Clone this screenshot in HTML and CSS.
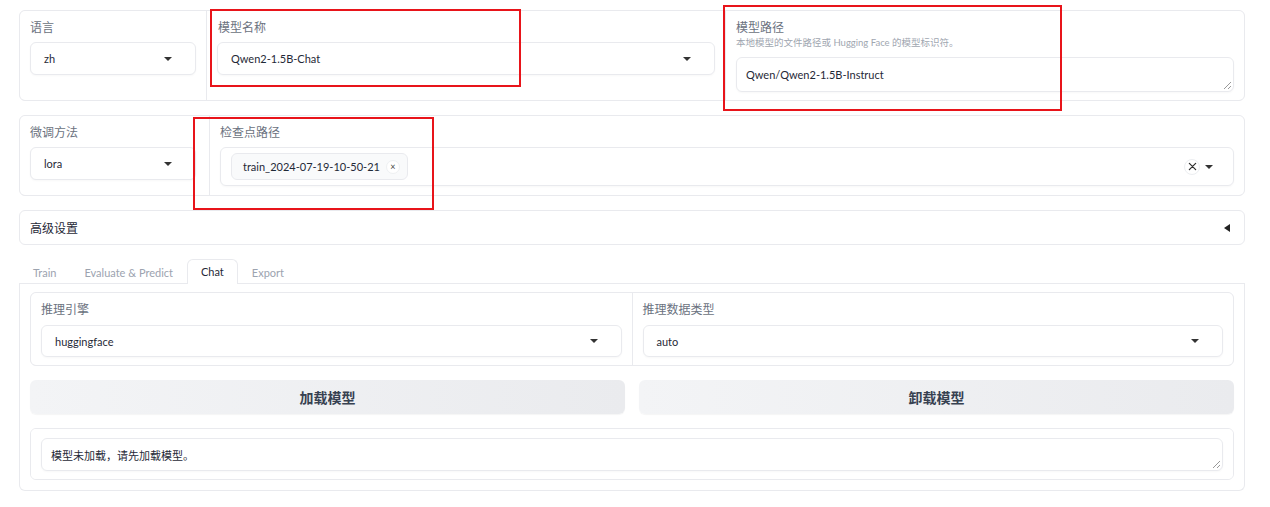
FILE: index.html
```html
<!DOCTYPE html>
<html lang="zh">
<head>
<meta charset="utf-8">
<title>LLaMA Board</title>
<link rel="stylesheet" href="styles.css">
</head>
<body>
<div class="page">
  <div class="form row1">
    <div class="block col-lang">
      <div class="label">语言</div>
      <div class="dropdown"><span class="val">zh</span><span class="caret"></span></div>
    </div>
    <div class="block col-wide">
      <div class="label">模型名称</div>
      <div class="dropdown"><span class="val">Qwen2-1.5B-Chat</span><span class="caret"></span></div>
    </div>
    <div class="block col-wide">
      <div class="label tight">模型路径</div>
      <div class="info">本地模型的文件路径或 Hugging Face 的模型标识符。</div>
      <div class="textarea"><span class="val">Qwen/Qwen2-1.5B-Instruct</span><span class="grip"></span></div>
    </div>
  </div>

  <div class="form row2">
    <div class="block col-method">
      <div class="label">微调方法</div>
      <div class="dropdown"><span class="val">lora</span><span class="caret"></span></div>
    </div>
    <div class="block col-fill">
      <div class="label">检查点路径</div>
      <div class="multi">
        <span class="chip">train_2024-07-19-10-50-21<span class="chip-x">×</span></span>
        <span class="multi-icons"><span class="clear">
          <svg width="9" height="9" viewBox="0 0 10 10"><path d="M1.5 1.5L8.5 8.5M8.5 1.5L1.5 8.5" stroke="#333" stroke-width="1.4" stroke-linecap="round"/></svg>
        </span><span class="caret"></span></span>
      </div>
    </div>
  </div>

  <div class="accordion">
    <span>高级设置</span>
    <span class="tri-left"></span>
  </div>

  <div class="tabs">
    <div class="tabbar">
      <span class="tab">Train</span>
      <span class="tab">Evaluate &amp; Predict</span>
      <span class="tab selected">Chat</span>
      <span class="tab">Export</span>
    </div>
    <div class="tabpanel">
      <div class="form inner">
        <div class="block col-half">
          <div class="label">推理引擎</div>
          <div class="dropdown short"><span class="val">huggingface</span><span class="caret"></span></div>
        </div>
        <div class="block col-half">
          <div class="label">推理数据类型</div>
          <div class="dropdown short"><span class="val">auto</span><span class="caret"></span></div>
        </div>
      </div>
      <div class="buttons">
        <button class="btn">加载模型</button>
        <button class="btn">卸载模型</button>
      </div>
      <div class="form outbox">
        <div class="block col-fill">
          <div class="textarea"><span class="val">模型未加载，请先加载模型。</span><span class="grip"></span></div>
        </div>
      </div>
    </div>
  </div>

  <div class="redbox rb1"></div>
  <div class="redbox rb2"></div>
  <div class="redbox rb3"></div>
</div>
</body>
</html>
```

FILE: styles.css
```css
* { box-sizing: border-box; }
html, body { margin: 0; padding: 0; background: #ffffff; }
body {
  font-family: "Lato", "Noto Sans CJK SC", sans-serif;
  font-size: 11px;
  color: #1f2937;
}
.page {
  position: relative;
  padding: 10px 25px 0 19px;
  width: 1270px;
  height: 507px;
}
.form {
  display: flex;
  gap: 1px;
  background: #e9eaee;
  border: 1px solid #e9eaee;
  border-radius: 6px;
  overflow: hidden;
}
.block {
  background: #fff;
  padding: 9px 10px 9px 10px;
}
.row1 { height: 91px; }
.row2 { height: 81px; margin-top: 14px; }
.col-lang { width: 186px; flex: none; }
.col-method { width: 189px; flex: none; padding-right: 13px; }
.col-wide { flex: 1; }
.col-fill { flex: 1; }
.col-half { flex: 1; }
.label {
  font-size: 12px;
  line-height: 16px;
  color: #6b7280;
  margin-bottom: 6px;
}
.label.tight { margin-bottom: 0; }
.row1 .col-wide:nth-child(2) .label { margin-left: 1px; }
.info {
  font-size: 9.5px;
  line-height: 14px;
  color: #a0a6b0;
  margin-bottom: 7px;
}
.dropdown, .textarea, .multi {
  position: relative;
  display: flex;
  align-items: center;
  border: 1px solid #e9eaee;
  border-radius: 6px;
  background: #fff;
  box-shadow: 0 1px 2px rgba(0,0,0,0.03);
  padding: 0 13px;
  font-size: 11px;
}
.dropdown { height: 33px; }
.dropdown.short { height: 32px; }
.textarea { height: 35px; padding: 0 9px; }
.val { flex: 1; white-space: nowrap; color: #1f2937; }
.caret {
  width: 0; height: 0;
  border-left: 4px solid transparent;
  border-right: 4px solid transparent;
  border-top: 4px solid #333;
  margin-right: 10px;
}
.grip {
  position: absolute;
  right: 2px; bottom: 2px;
  width: 7px; height: 7px;
  background:
    linear-gradient(135deg, transparent 45%, #999 45%, #999 55%, transparent 55%),
    linear-gradient(135deg, transparent 75%, #999 75%, #999 85%, transparent 85%);
}
.multi { height: 39px; padding: 0 10px; }
.chip {
  display: inline-flex;
  align-items: center;
  height: 27px;
  padding: 0 7px 0 11px;
  border: 1px solid #e9eaee;
  border-radius: 6px;
  background: #f9fafb;
  color: #1f2937;
  white-space: nowrap;
}
.chip-x {
  display: inline-flex;
  align-items: center;
  justify-content: center;
  width: 14px; height: 14px;
  margin-left: 6px;
  border-radius: 50%;
  border: 1px solid #eef0f2;
  background: #fff;
  font-size: 9px;
  color: #444;
}
.multi-icons { margin-left: auto; display: flex; align-items: center; }
.clear {
  display: inline-flex;
  align-items: center;
  justify-content: center;
  width: 16px; height: 16px;
  border-radius: 50%;
  border: 1px solid #eceef1;
  margin-right: 5px;
}
.multi .caret { margin-right: 10px; }

.accordion {
  margin-top: 14px;
  height: 35px;
  border: 1px solid #e9eaee;
  border-radius: 6px;
  display: flex;
  align-items: center;
  justify-content: space-between;
  padding: 0 14px 0 10px;
  font-size: 12px;
  color: #1f2937;
}
.tri-left {
  width: 0; height: 0;
  border-top: 4px solid transparent;
  border-bottom: 4px solid transparent;
  border-right: 6px solid #222;
}

.tabs { margin-top: 15px; }
.tabbar {
  display: flex;
  align-items: flex-end;
  height: 24px;
  border-bottom: 1px solid #e9eaee;
}
.tab {
  display: inline-flex;
  align-items: center;
  padding: 0 13px;
  height: 23px;
  color: #9ca3af;
  font-size: 11px;
  border: 1px solid transparent;
  border-bottom: none;
  border-radius: 6px 6px 0 0;
}
.tab:first-child { padding-left: 13px; }
.tab.selected {
  color: #1f2937;
  background: #fff;
  border-color: #e9eaee;
  margin-bottom: -1px;
  height: 25px;
  padding-bottom: 1px;
}
.tabpanel {
  border: 1px solid #e9eaee;
  border-top: none;
  border-radius: 0 0 6px 6px;
  padding: 8px 10px 9px 10px;
  height: 207px;
}
.inner { height: 74px; }
.inner .block { padding: 9px 10px 8px 10px; }
.inner .label { margin-bottom: 7px; }
.buttons {
  display: flex;
  gap: 14px;
  margin-top: 14px;
}
.btn {
  flex: 1;
  height: 34px;
  border: none;
  border-radius: 6px;
  background: linear-gradient(90deg, #f3f4f6, #eaebee);
  font-family: "Lato", "Noto Sans CJK SC", sans-serif;
  font-size: 14px;
  font-weight: 700;
  color: #374151;
  box-shadow: 0 1px 1px rgba(0,0,0,0.04);
}
.outbox { margin-top: 14px; height: 52px; }
.outbox .block { padding: 9px 10px; }
.outbox .textarea { height: 33px; padding: 0 9px; }

.redbox {
  position: absolute;
  border: 2px solid #e8141a;
  pointer-events: none;
}
.rb1 { left: 210px; top: 9px; width: 311px; height: 78px; }
.rb2 { left: 193px; top: 117px; width: 241px; height: 93px; }
.rb3 { left: 723px; top: 5px; width: 339px; height: 106px; }
```
